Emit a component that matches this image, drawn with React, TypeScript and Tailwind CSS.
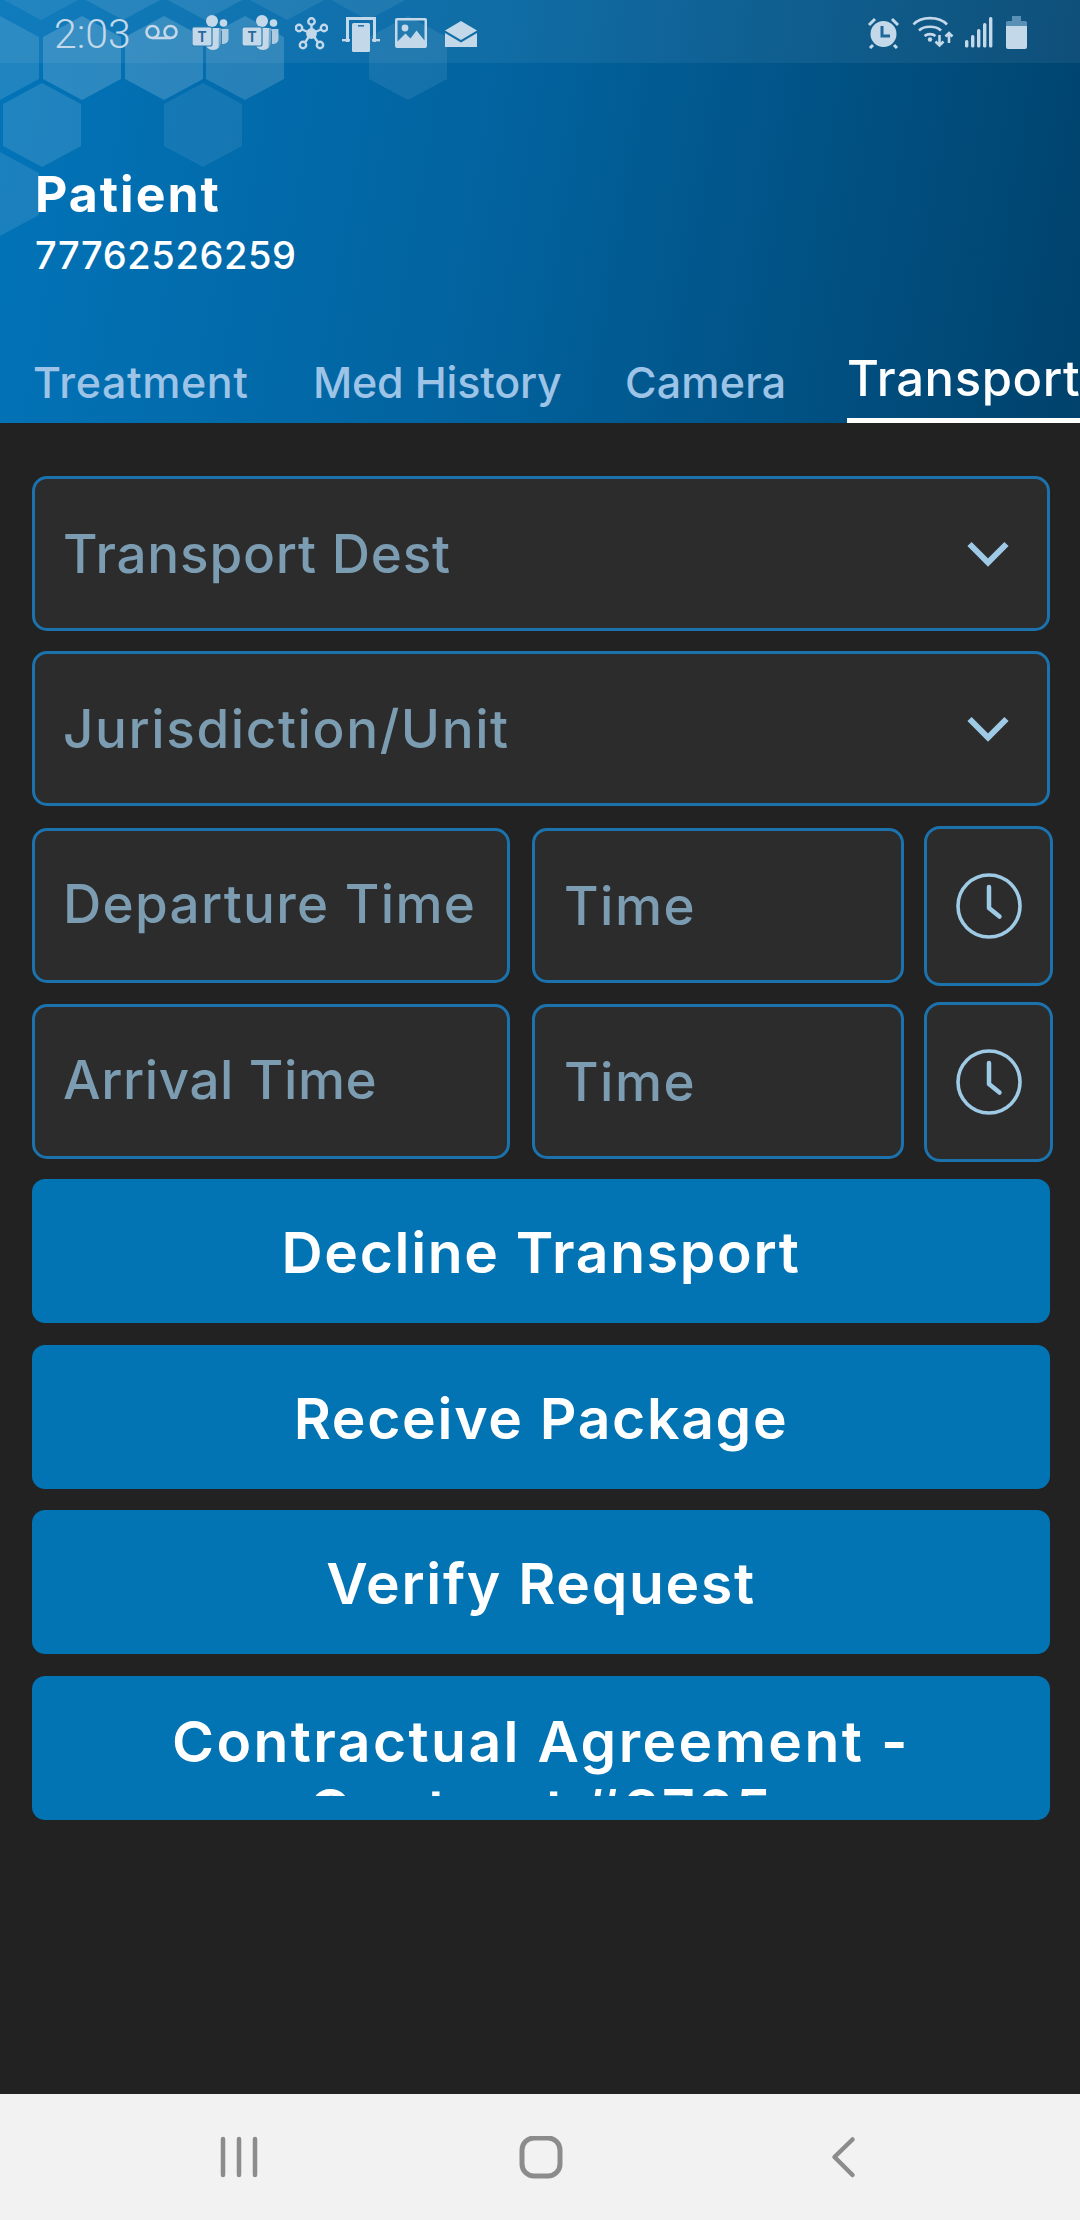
import type { ReactNode } from 'react';

const iconColor = '#c3d8e8';

const hexes: [number, number, number][] = [
    [41, -22, 0.08], [123, -22, 0.1], [205, -22, 0.1], [287, -22, 0.08], [368, -22, 0.07],
    [0, 58, 0.12], [82, 58, 0.17], [164, 58, 0.17], [245, 58, 0.15], [408, 58, 0.08],
    [42, 125, 0.12], [203, 125, 0.08],
    [0, 194, 0.1],
];

function HexBackground() {
    return (
        <svg className='absolute top-0 left-0' width='1080' height='423' viewBox='0 0 1080 423'>
            {hexes.map(([cx, cy, opacity]) => (
                <polygon
                    key={`${cx}-${cy}`}
                    points={`${cx},${cy - 42} ${cx + 39},${cy - 21} ${cx + 39},${cy + 21} ${cx},${cy + 42} ${cx - 39},${cy + 21} ${cx - 39},${cy - 21}`}
                    fill='#ffffff'
                    opacity={opacity}
                />
            ))}
        </svg>
    );
}

function TeamsIcon({ className }: { className: string }) {
    return (
        <svg className={className} width='37' height='35' viewBox='0 0 37 35'>
            <circle cx='20' cy='6' r='6' fill={iconColor} />
            <circle cx='31.5' cy='8' r='3.8' fill={iconColor} />
            <path d='M26 14h10.5v10a5 5 0 0 1-5 5H30V16z' fill={iconColor} opacity='0.85' />
            <path d='M13 13h16v14a8 8 0 0 1-16 0z' fill={iconColor} />
            <path d='M27 13h2.5v15a7 7 0 0 1-3 5z' fill='#2a74a8' opacity='0.5' />
            <rect x='0' y='12' width='20' height='19' rx='2' fill={iconColor} stroke='#2a7cb4' strokeWidth='1.2' />
            <text x='10' y='26.5' textAnchor='middle' fontSize='14' fontWeight='700' fontFamily='Roboto, sans-serif' fill='#2a6a9c'>T</text>
        </svg>
    );
}

function StatusBar() {
    return (
        <div className='relative h-[63px] bg-white/[0.06] flex items-start pl-[54px] pr-[53px]'>
            <span className="w-[91px] mt-[11px] font-['Roboto',sans-serif] font-light text-[41px] leading-[46px] text-[#c3d8e8]">2:03</span>
            {/* voicemail */}
            <svg className='mt-[24px]' width='33' height='17' viewBox='0 0 33 17' fill='none' stroke={iconColor} strokeWidth='2.6'>
                <circle cx='7.5' cy='8' r='6' />
                <circle cx='25.5' cy='8' r='6' />
                <path d='M7.5 14h18' />
            </svg>
            <TeamsIcon className='mt-[15px] ml-[14px]' />
            <TeamsIcon className='mt-[15px] ml-[13px]' />
            {/* network hub */}
            <svg className='mt-[17px] ml-[16px]' width='33' height='33' viewBox='0 0 33 33' fill='none' stroke={iconColor} strokeWidth='2.4'>
                <circle cx='16.5' cy='16.5' r='4.2' fill={iconColor} />
                <circle cx='16.5' cy='4.5' r='3.2' />
                <circle cx='4' cy='11' r='3.2' />
                <circle cx='29' cy='11' r='3.2' />
                <circle cx='8' cy='28' r='3.2' />
                <circle cx='25' cy='28' r='3.2' />
                <path d='M16.5 8v5M7 12.5l6 2.5M26 12.5l-6 2.5M10 25.5l4-6M23 25.5l-4-6' />
            </svg>
            {/* phone on a stand */}
            <svg className='mt-[17px] ml-[14px]' width='38' height='35' viewBox='0 0 38 35' fill={iconColor}>
                <path d='M4 0h30v25h-3V3H7v22H4z' />
                <rect x='0' y='22' width='8' height='2.4' />
                <rect x='30' y='22' width='8' height='2.4' />
                <rect x='10' y='6' width='18' height='29' rx='1.5' />
                <rect x='16' y='8' width='6' height='1.6' fill='#2a74a8' />
            </svg>
            {/* image */}
            <svg className='mt-[18px] ml-[15px]' width='32' height='30' viewBox='0 0 32 30'>
                <path fillRule='evenodd' d='M2 0h28a2 2 0 0 1 2 2v26a2 2 0 0 1-2 2H2a2 2 0 0 1-2-2V2a2 2 0 0 1 2-2zM2.5 2.5v21l8-8 5 5 6-8 8 10V2.5z' fill={iconColor} />
                <circle cx='10' cy='10' r='3.4' fill={iconColor} />
            </svg>
            {/* open mail */}
            <svg className='mt-[21px] ml-[18px]' width='32' height='26' viewBox='0 0 32 26' fill={iconColor}>
                <path d='M16 0l16 9.5-16 9.5L0 9.5z' />
                <path d='M0 12l16 9.5L32 12v14H0z' />
            </svg>
            <div className='ml-auto flex items-start'>
                {/* alarm */}
                <svg className='mt-[17px]' width='33' height='32' viewBox='0 0 33 32'>
                    <path d='M2 8l6-6M31 8l-6-6M6 28l-3 3M27 28l3 3' stroke={iconColor} strokeWidth='3' />
                    <circle cx='16.5' cy='17' r='13' fill={iconColor} />
                    <path d='M15 9v10h8' stroke='#1f6699' strokeWidth='3' fill='none' />
                </svg>
                {/* wifi with arrows */}
                <svg className='mt-[15px] ml-[12px]' width='42' height='33' viewBox='0 0 42 33' fill='none' stroke={iconColor} strokeWidth='2.6'>
                    <path d='M1.5 9.5C9 1 27 1 35 9.5' />
                    <path d='M7 15.5c5-5 17-5 22 0' />
                    <path d='M12.5 21c3-2.5 8-2.5 11 0' />
                    <circle cx='18' cy='24.5' r='2.2' fill={iconColor} stroke='none' />
                    <path d='M27.5 20v10M23.5 26.5l4 4 4-4M37 28V18M33.5 21.5l3.5-3.5 3.5 3.5' />
                </svg>
                {/* signal */}
                <svg className='mt-[17px] ml-[11px]' width='28' height='31' viewBox='0 0 28 31' fill={iconColor}>
                    <rect x='0' y='23' width='3.4' height='7.5' rx='1.5' />
                    <rect x='6' y='18' width='3.4' height='12.5' rx='1.5' />
                    <rect x='12' y='12' width='3.4' height='18.5' rx='1.5' />
                    <rect x='18' y='6' width='3.4' height='24.5' rx='1.5' />
                    <rect x='24' y='0' width='3.4' height='30.5' rx='1.5' />
                </svg>
                {/* battery */}
                <svg className='mt-[16px] ml-[13px]' width='21' height='33' viewBox='0 0 21 33'>
                    <path d='M0 6.5h21V31a2 2 0 0 1-2 2H2a2 2 0 0 1-2-2z' fill={iconColor} />
                    <path d='M6 0h9v5h4a2 2 0 0 1 2 2v3H0V7a2 2 0 0 1 2-2h4z' fill='#5a8fb6' />
                </svg>
            </div>
        </div>
    );
}

function Header() {
    return (
        <header className='relative h-[423px] overflow-hidden bg-[linear-gradient(100deg,#0274b9_0%,#02639f_45%,#00426c_100%)]'>
            <HexBackground />
            <StatusBar />
            <div className='relative pl-[35px] pt-[103px]'>
                <p className='text-[50px] leading-[56px] font-bold text-white tracking-[2px]'>Patient</p>
                <p className='mt-[10px] text-[38px] leading-[46px] font-medium text-white tracking-[0.6px]'>77762526259</p>
            </div>
            <nav className='absolute bottom-0 left-0 flex items-end pl-[33px]'>
                <Tab className='w-[280px] tracking-[0.6px]'>Treatment</Tab>
                <Tab className='w-[312px] tracking-[-0.2px]'>Med History</Tab>
                <Tab className='w-[222px] tracking-[0.2px]'>Camera</Tab>
                <div className='w-[233px] h-[68px] border-b-[5px] border-white whitespace-nowrap text-[49px] leading-[48px] font-medium text-white tracking-[0.6px]'>
                    Transport
                </div>
            </nav>
        </header>
    );
}

function Tab({ className, children }: { className: string; children: ReactNode }) {
    return (
        <div className={`${className} h-[65px] whitespace-nowrap text-[43px] leading-[48px] font-medium text-[#9dc3e6]`}>
            {children}
        </div>
    );
}

function Chevron() {
    return (
        <svg width='42' height='26' viewBox='0 0 42 26' fill='none' stroke='#9ecae6' strokeWidth='6'>
            <path d='M2.5 3L21 21.5 39.5 3' />
        </svg>
    );
}

function SelectField({ label, tracking }: { label: string; tracking: string }) {
    return (
        <div className='h-[155px] flex items-center justify-between pl-[28px] pr-[38px] bg-[#2c2c2c] border-[3px] border-[#1b72ad] rounded-[15px]'>
            <span className={`${tracking} text-[53px] font-medium leading-[60px] text-[#7c9cb2]`}>{label}</span>
            <Chevron />
        </div>
    );
}

function TimeRow({ label, tracking }: { label: string; tracking: string }) {
    return (
        <div className='h-[155px] flex items-center'>
            <div className='w-[478px] h-full shrink-0 flex items-center pl-[28px] bg-[#2c2c2c] border-[3px] border-[#1b72ad] rounded-[15px]'>
                <span className={`${tracking} text-[53px] font-medium leading-[60px] pb-[4px] text-[#7c9cb2] whitespace-nowrap`}>{label}</span>
            </div>
            <div className='ml-[22px] w-[372px] h-full shrink-0 flex items-center pl-[29px] bg-[#2c2c2c] border-[3px] border-[#1b72ad] rounded-[15px]'>
                <span className='text-[53px] font-medium leading-[60px] text-[#7c9cb2] tracking-[1.5px]'>Time</span>
            </div>
            <div className='ml-[20px] w-[129px] h-[160px] shrink-0 flex items-center justify-center bg-[#2c2c2c] border-[3px] border-[#1b72ad] rounded-[16px]'>
                <svg width='66' height='66' viewBox='0 0 66 66' fill='none' stroke='#9ecae6' strokeWidth='3.6' strokeLinecap='round' strokeLinejoin='round'>
                    <circle cx='33' cy='33' r='31' />
                    <path d='M33 14v21l10.5 8.5' strokeWidth='4.5' />
                </svg>
            </div>
        </div>
    );
}

function ActionButton({ children }: { children: ReactNode }) {
    return (
        <div className='h-[144px] pt-[4px] flex items-center justify-center bg-[#0273b3] rounded-[13px] text-[57px] leading-[68px] font-semibold text-white tracking-[1.7px]'>
            {children}
        </div>
    );
}

function BottomNav() {
    return (
        <div className='h-[126px] bg-[#f2f2f2] flex items-start justify-center pt-[42px]'>
            <svg width='720' height='44' viewBox='180 2136 720 44' fill='none' stroke='#8c8c8c' strokeLinecap='round'>
                <path d='M223 2139v36M239 2139v36M255 2139v36' strokeWidth='4.5' />
                <rect x='522' y='2138' width='38' height='38' rx='12' strokeWidth='5' />
                <path d='M852.5 2139.5L834.5 2157l18 18' strokeWidth='4.5' strokeLinejoin='round' />
            </svg>
        </div>
    );
}

export default function App() {
    return (
        <div className="w-[1080px] h-[2220px] flex flex-col bg-[#222222] overflow-hidden font-['Inter',sans-serif]">
            <Header />
            <main className='flex-1 pt-[53px] pl-[32px] pr-[30px]'>
                <SelectField label='Transport Dest' tracking='tracking-[0.8px]' />
                <div className='mt-[20px]'><SelectField label='Jurisdiction/Unit' tracking='tracking-[1.6px]' /></div>
                <div className='mt-[22px]'><TimeRow label='Departure Time' tracking='tracking-[1.3px]' /></div>
                <div className='mt-[21px]'><TimeRow label='Arrival Time' tracking='tracking-[0.6px]' /></div>
                <div className='mt-[20px] flex flex-col gap-[21.67px]'>
                    <ActionButton>Decline Transport</ActionButton>
                    <ActionButton>Receive Package</ActionButton>
                    <ActionButton>Verify Request</ActionButton>
                    <div className='h-[144px] pt-[32px] pb-[24px] bg-[#0273b3] rounded-[13px] text-[57px] leading-[68px] font-semibold text-white tracking-[2.4px]'>
                        <div className='h-full overflow-hidden text-center'>
                            Contractual Agreement -<br />Contract #3765
                        </div>
                    </div>
                </div>
            </main>
            <BottomNav />
        </div>
    );
}
